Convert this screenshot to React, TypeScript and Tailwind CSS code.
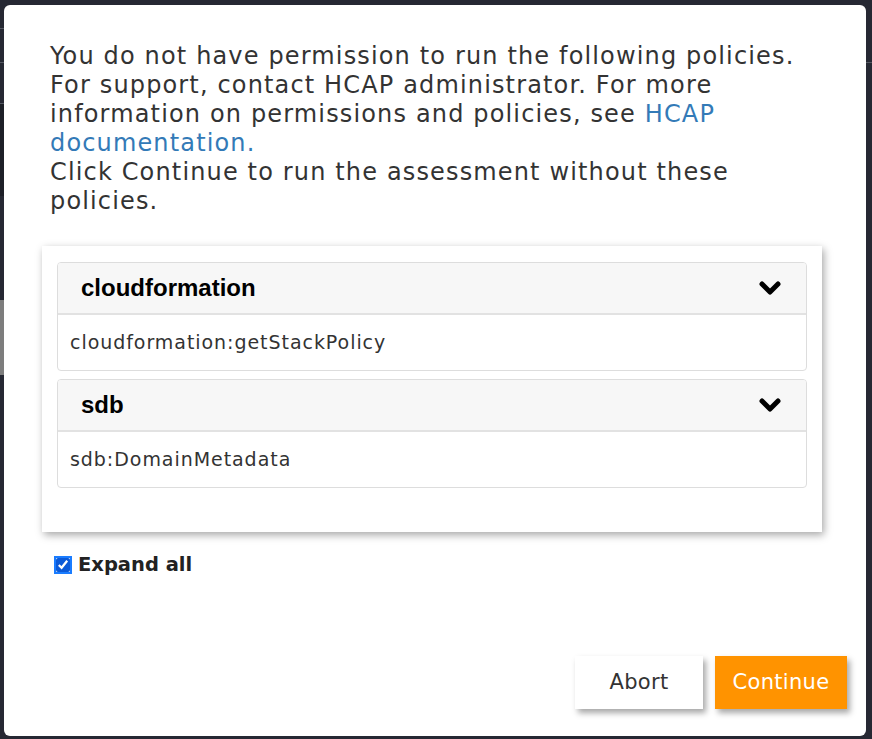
import React from 'react';

const BODY_FONT = "font-['DejaVu_Sans',_'Liberation_Sans',_sans-serif]";

// Chevron shown on the right of each policy group header
const Chevron = () => (
  <svg width="22" height="15" viewBox="0 0 22 15" className="shrink-0">
    <polyline points="3,3 11,11 19,3" fill="none" stroke="#000" strokeWidth="5" strokeLinecap="round" strokeLinejoin="round" />
  </svg>
);

const PolicyGroup = ({ service, actions }: { service: string; actions: string[] }) => (
  <div className="rounded border border-[#dddddd] bg-white overflow-hidden">
    <div className="flex items-center justify-between h-[52px] pl-[23px] pr-[25px] bg-[#f7f7f7] border-b-2 border-[#e2e2e2]">
      <span className="font-['Liberation_Sans',_Arial,_sans-serif] font-bold text-[24px] text-black">{service}</span>
      <Chevron />
    </div>
    {actions.map((a) => (
      <div key={a} className={`h-[55px] flex items-center pl-[12px] text-[19px] tracking-[0.95px] text-[#333] ${BODY_FONT}`}>
        {a}
      </div>
    ))}
  </div>
);

export default function App() {
  return (
    <div className="w-[872px] h-[739px] bg-[#262833] overflow-hidden relative">
      {/* background strip peeking out on the left */}
      <div className="absolute left-0 top-[28px] w-[4px] h-px bg-[#555862]" />
      <div className="absolute left-0 top-[62px] w-[4px] h-px bg-[#555862]" />
      <div className="absolute left-0 top-[103px] w-[4px] h-px bg-[#555862]" />
      <div className="absolute left-0 top-[104px] w-[4px] h-[92px] bg-[#1d1f27]" />
      <div className="absolute left-0 top-[300px] w-[4px] h-[75px] bg-[#7d7d7d]" />
      <div className="absolute right-0 top-[62px] w-[6px] h-px bg-[#555862]" />

      <div className="ml-[4px] mt-[5px] w-[862px] h-[731px] bg-white rounded-[6px] flex flex-col px-[38px] pt-[37px] pb-[27px]">
        <p className={`px-2 w-[776px] text-[24px] leading-[29px] tracking-[1.15px] text-[#333333] ${BODY_FONT}`}>
          You do not have permission to run the following policies.
          <br />
          For support, contact HCAP administrator. For more information on permissions and policies, see{' '}
          <a className="text-[#337ab7]">HCAP</a> <a className="text-[#337ab7]">documentation.</a>
          <br />
          Click Continue to run the assessment without these policies.
        </p>

        <div className="mt-[30px] w-[780px] bg-white shadow-[2px_3px_8px_rgba(0,0,0,0.35)] px-[15px] pt-[16px] pb-[44px] flex flex-col gap-[8px]">
          <PolicyGroup service="cloudformation" actions={['cloudformation:getStackPolicy']} />
          <PolicyGroup service="sdb" actions={['sdb:DomainMetadata']} />
        </div>

        <label className="mt-[18px] flex items-center gap-[8px] px-[14px]">
          <input
            type="checkbox"
            checked
            readOnly
            className="m-0 w-[14px] h-[14px] accent-[#0b5ad8] outline-2 outline-[#1a7cff] outline-offset-0"
          />
          <span className={`font-bold text-[19.5px] text-[#222] ${BODY_FONT}`}>Expand all</span>
        </label>

        <div className="mt-auto flex justify-end gap-[12px] -mr-[19px]">
          <button className={`w-[128px] h-[53px] bg-white text-[#333] text-[21px] tracking-[0.3px] shadow-[3px_4px_6px_rgba(0,0,0,0.35)] ${BODY_FONT}`}>
            Abort
          </button>
          <button className={`w-[132px] h-[53px] bg-[#ff9300] text-white text-[21px] tracking-[0.3px] shadow-[3px_4px_6px_rgba(0,0,0,0.35)] ${BODY_FONT}`}>
            Continue
          </button>
        </div>
      </div>
    </div>
  );
}
